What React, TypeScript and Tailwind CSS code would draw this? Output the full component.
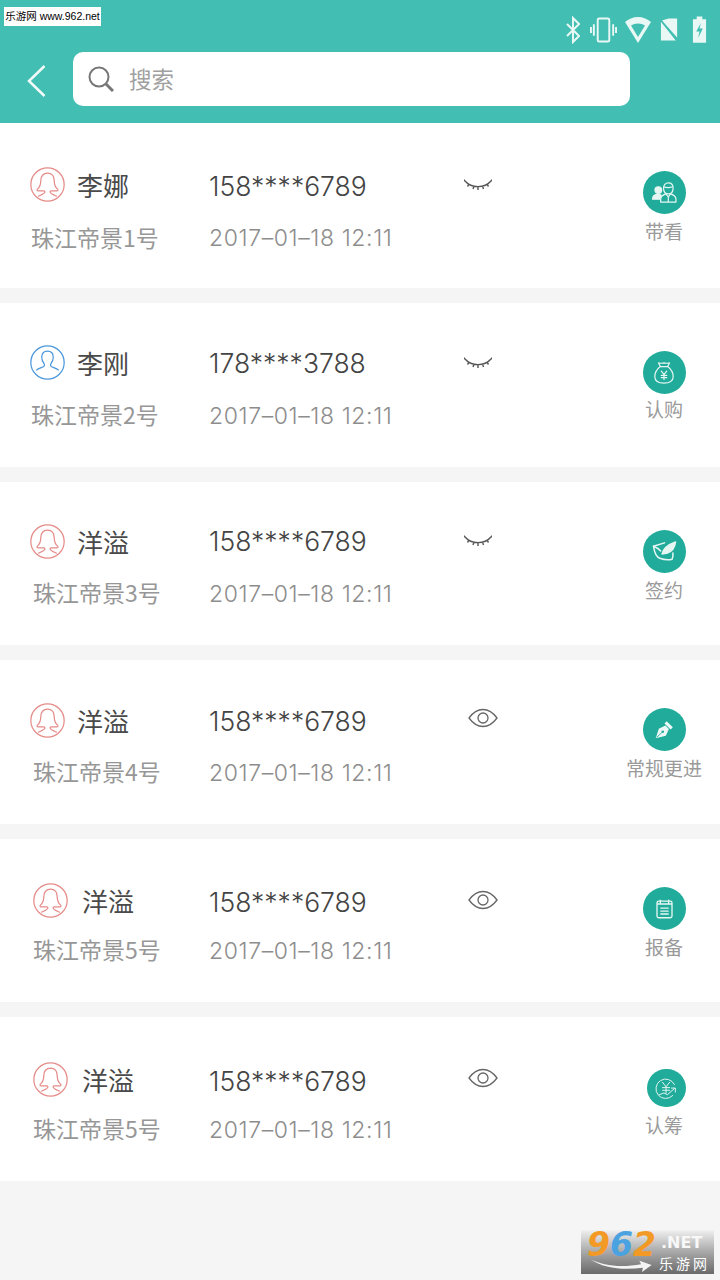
import React from "react";

const cjk = "font-['Noto_Sans_CJK_SC','Noto_Sans',sans-serif]";

function Female() {
  return (
    <svg viewBox="0 0 34 34" className="w-[35px] h-[35px] shrink-0 -mt-[2px]" fill="none" stroke="#e58b88" strokeWidth="1.200">
      <circle cx="17" cy="17" r="16.200" />
      <path d="M17 6c-4.200 0-6.500 3-6.500 7 0 4-1 6.500-3.300 8.500-.8.7-.4 1.700.8 1.700h5.500c.7 0 1 .4 1 1 0 1.300-2.500 2.300-6.500 4.300M17 6c4.200 0 6.500 3 6.500 7 0 4 1 6.500 3.300 8.500.8.7.4 1.700-.8 1.700h-5.500c-.7 0-1 .4-1 1 0 1.300 2.500 2.300 6.500 4.300" />
    </svg>
  );
}
function Male() {
  return (
    <svg viewBox="0 0 34 34" className="w-[35px] h-[35px] shrink-0 -mt-[2px]" fill="none" stroke="#4a97dc" strokeWidth="1.200">
      <circle cx="17" cy="17" r="16.200" />
      <path d="M17 6c-3.800 0-5.600 2.800-5.600 6 0 2.500.9 4.500 2.200 6 .7.9.6 2.300-.3 2.900-1.600 1-4.600 1.700-7.200 3.600M17 6c3.800 0 5.600 2.800 5.600 6 0 2.500-.9 4.500-2.200 6-.7.9-.6 2.300.3 2.900 1.600 1 4.600 1.700 7.200 3.600" />
    </svg>
  );
}
function EyeClosed() {
  return (
    <svg viewBox="0 0 28 14" className="w-[28px] h-[14px]" fill="none" stroke="#555" strokeWidth="1.400">
      <path d="M1 2c3.500 4 7.500 5.600 13 5.600S23.500 6 27 2M1 2 0 .8M27 2l1-1.200M5 5.200 3.500 7.500M10 7l-1 3M14 7.600V11M18.500 7l1 3M23 5.200l1.500 2.300" />
    </svg>
  );
}
function EyeOpen() {
  return (
    <svg viewBox="0 0 30 20" className="w-[30px] h-[20px]" fill="none" stroke="#666" strokeWidth="1.300">
      <path d="M1 10C5 4.500 9.500 1.500 15 1.500S25 4.500 29 10c-4 5.500-8.500 8.500-14 8.500S5 15.500 1 10Z" />
      <circle cx="15" cy="10" r="5" />
    </svg>
  );
}

function Glyph({ kind }: { kind: string }) {
  const c = { fill: "none", stroke: "#e6f6f3", strokeWidth: 1.300, strokeLinejoin: "round" as const, strokeLinecap: "round" as const };
  if (kind === "people")
    return (
      <svg viewBox="0 0 28 22" className="w-[27px] h-[21px]" {...c}>
        <circle cx="7.500" cy="8.500" r="3.500" fill="#e6f6f3" />
        <path d="M1.500 18c0-3 2-5 6-5 1.500 0 2 .3 3 .8L9 18Z" fill="#e6f6f3" />
        <path d="M13 6.500C13 3 15 1 18 1s5 2 5 5.500-2 6-5 6-5-2.500-5-6ZM13.500 5c2 1 6 1 9 0" />
        <path d="M10 21v-3c0-3 2.500-4.500 5.500-5.500l2.500 3 2.500-3c3 1 5.500 2.500 5.500 5.500v3ZM18 15.500V21" />
      </svg>
    );
  if (kind === "bag")
    return (
      <svg viewBox="0 0 24 26" className="w-[22px] h-[24px]" {...c}>
        <path d="M8 6 6 2c2 .8 4 .2 6 0 2 .2 4 .8 6 0l-2 4M8 6h8M8 6C4 9 2 13 2 17c0 5 4 7 10 7s10-2 10-7c0-4-2-8-6-11" />
        <path d="m9 11 3 3.500 3-3.500M12 14.500V20M9 15.500h6M9 18h6" />
      </svg>
    );
  if (kind === "sign")
    return (
      <svg viewBox="0 0 26 24" className="w-[25px] h-[23px]" {...c} strokeWidth={1.600}>
        <path d="M8 19C4.500 18 2.500 13 1.500 6.500L13 3M8 19c4 1.500 9 2 13 1 1-2 1-4.500.8-6.500" />
        <path d="M1.500 6.500C4 7.500 7 9 9 11.500" />
        <path d="M10.500 14.500C11.500 10 16 5 24.500 2c-.8 6-3.500 10-8.500 11.500-1.500.5-3.500.5-5.500 1Z" fill="#e6f6f3" />
      </svg>
    );
  if (kind === "pen")
    return (
      <svg viewBox="0 0 24 24" className="w-[21px] h-[21px]" fill="#eef9f7">
        <path d="m2 22 3.500-11L13 7.500l4 4-3.500 7.500L2 22Z" />
        <path d="M14.500 2.500 21.500 9.500 19 12l-7-7Z" />
        <circle cx="10" cy="14.500" r="1.500" fill="#20ab9b" />
        <path d="m3 21 6-5.500" stroke="#20ab9b" strokeWidth="1" />
      </svg>
    );
  if (kind === "note")
    return (
      <svg viewBox="0 0 20 24" className="w-[17px] h-[20px]" {...c} strokeLinecap="butt" strokeWidth={1.600}>
        <rect x="1" y="2.500" width="18" height="20" rx="2" />
        <path d="M5 1v4M15 1v4M1 6h18M5 11h10M5 14.500h10M5 18h10" />
      </svg>
    );
  return (
    <svg viewBox="0 0 26 26" className="w-[23px] h-[23px]" {...c} strokeWidth={1.100}>
      <path d="M22 8.500A11 11 0 1 0 20 21" />
      <path d="m8.500 6 4 5 4-5M12.500 11v7M8.500 12h8M8.500 15h8" />
      <path d="m5 20 5-2 4 2 8-7M18.500 12.500H23V17" />
    </svg>
  );
}

type R = {
  male?: boolean; name: string; sub: string; phone: string; open?: boolean; label: string; icon: string;
  h: string; left: string; nameGap: string; subM: string; mid: string; dateM: string; eye: string; act: string; labelM: string; small?: boolean;
};

const rows: R[] = [
  { name: "李娜", sub: "珠江帝景1号", phone: "158****6789", label: "带看", icon: "people", h: "h-[165px]", left: "pt-[44px] pl-[30px]", nameGap: "gap-[12px]", subM: "mt-[19px] ml-[1px]", mid: "pt-[48px]", dateM: "mt-[22px]", eye: "pt-[56px] pl-[46px]", act: "pt-[48px]", labelM: "mt-[4px]" },
  { male: true, name: "李刚", sub: "珠江帝景2号", phone: "178****3788", label: "认购", icon: "bag", h: "h-[164px]", left: "pt-[42px] pl-[30px]", nameGap: "gap-[12px]", subM: "mt-[18px] ml-[1px]", mid: "pt-[45px]", dateM: "mt-[23px]", eye: "pt-[54px] pl-[46px]", act: "pt-[48px]", labelM: "mt-[2px]" },
  { name: "洋溢", sub: "珠江帝景3号", phone: "158****6789", label: "签约", icon: "sign", h: "h-[163px]", left: "pt-[42px] pl-[30px]", nameGap: "gap-[12px]", subM: "mt-[17px] ml-[3px]", mid: "pt-[44px]", dateM: "mt-[23px]", eye: "pt-[53px] pl-[46px]", act: "pt-[48px]", labelM: "mt-[4px]" },
  { open: true, name: "洋溢", sub: "珠江帝景4号", phone: "158****6789", label: "常规更进", icon: "pen", h: "h-[164px]", left: "pt-[43px] pl-[30px]", nameGap: "gap-[12px]", subM: "mt-[17px] ml-[3px]", mid: "pt-[46px]", dateM: "mt-[22px]", eye: "pt-[48px] pl-[50px]", act: "pt-[48px]", labelM: "mt-[4px]" },
  { open: true, name: "洋溢", sub: "珠江帝景5号", phone: "158****6789", label: "报备", icon: "note", h: "h-[163px]", left: "pt-[44px] pl-[33px]", nameGap: "gap-[14px]", subM: "mt-[15px]", mid: "pt-[48px]", dateM: "mt-[19px]", eye: "pt-[51px] pl-[50px]", act: "pt-[48px]", labelM: "mt-[4px]" },
  { open: true, name: "洋溢", sub: "珠江帝景5号", phone: "158****6789", label: "认筹", icon: "yen", h: "h-[164px]", left: "pt-[45px] pl-[33px]", nameGap: "gap-[14px]", subM: "mt-[15px]", mid: "pt-[49px]", dateM: "mt-[19px]", eye: "pt-[51px] pl-[50px]", act: "pt-[52px]", labelM: "mt-[5px]", small: true },
];

function Row({ r }: { r: R }) {
  return (
    <div className={`flex bg-white ${r.h}`}>
      <div className={`w-[209px] shrink-0 ${r.left}`}>
        <div className={`flex items-center h-[36px] ${r.nameGap}`}>
          {r.male ? <Male /> : <Female />}
          <span className="text-[26px] leading-[36px] text-[#4a4a4a]">{r.name}</span>
        </div>
        <div className={`text-[23px] leading-[30px] text-[#979797] whitespace-nowrap ${r.subM}`}>{r.sub}</div>
      </div>
      <div className={`w-[255px] shrink-0 ${r.mid} font-['Inter',sans-serif]`}>
        <div className="text-[26.500px] leading-[30px] text-[#444] font-light whitespace-nowrap">{r.phone}</div>
        <div className={`text-[23px] tracking-[0.600px] leading-[30px] text-[#8d8d8d] font-light whitespace-nowrap ${r.dateM}`}>2017–01–18 12:11</div>
      </div>
      <div className={`flex-1 min-w-0 -ml-[46px] ${r.eye}`}>{r.open ? <EyeOpen /> : <EyeClosed />}</div>
      <div className={`w-[112px] shrink-0 flex flex-col items-center ${r.act}`}>
        <div className={`rounded-full bg-[#20ab9b] flex items-center justify-center ${r.small ? "w-[39px] h-[38px] ml-[4px]" : "w-[43px] h-[43px]"}`}>
          <Glyph kind={r.icon} />
        </div>
        <div className={`text-[19px] leading-[26px] text-[#9a9a9a] whitespace-nowrap ${r.labelM}`}>{r.label}</div>
      </div>
    </div>
  );
}

export default function App() {
  return (
    <div className={`relative w-[720px] h-[1280px] overflow-hidden bg-[#f5f5f5] ${cjk}`}>
      <header className="h-[123px] bg-[#42bfb2] flex flex-col">
        <div className="h-[52px] flex items-start justify-between pt-[7px] pr-[13px] pl-[4px]">
          <div className="w-[97px] h-[19px] bg-white text-black text-[10.500px] leading-[19px] text-center whitespace-nowrap font-['Liberation_Sans','Noto_Sans_CJK_SC',sans-serif]">乐游网 www.962.net</div>
          <div className="flex items-center pt-[7px]">
            <svg viewBox="0 0 14 28" className="w-[14px] h-[28px]" fill="none" stroke="#e9f7f5" strokeWidth="2">
              <path d="M1 8l12 12-6 6V2l6 6L1 20" />
            </svg>
            <svg viewBox="0 0 28 26" className="w-[27px] h-[26px] ml-[10px]" fill="none" stroke="#e9f7f5" strokeWidth="2">
              <rect x="8" y="1" width="12" height="24" rx="1.500" />
              <path d="M4 7v12M1 10v6M24 7v12M27 10v6" />
            </svg>
            <svg viewBox="0 0 26 26" className="w-[26px] h-[28px] ml-[8px]">
              <path d="M0 5C3.500 2 8 0 13 0s9.500 2 13 5L13 26Z" fill="#e9f7f5" />
              <path d="M6 8.500C8 7.300 10.300 6.500 13 6.500s5 .8 7 2L13 20Z" fill="#42bfb2" />
            </svg>
            <svg viewBox="0 0 20 26" className="w-[19px] h-[26px] ml-[9px]" fill="#e9f7f5">
              <path d="M9 1h9v20L2 3Z" />
              <path d="M1 4l16 20H1Z" />
              <path d="M0 1.500 19 26" stroke="#42bfb2" strokeWidth="1.500" />
            </svg>
            <svg viewBox="0 0 16 28" className="w-[15px] h-[31px] ml-[13px]">
              <path d="M5 0h6v3h4v25H1V3h4Z" fill="#e9f7f5" />
              <path d="M9.500 7 4.500 16H8l-1.500 7 5-10H8Z" fill="#42bfb2" />
            </svg>
          </div>
        </div>
        <div className="flex items-center pl-[27px]">
          <svg viewBox="0 0 19 32" className="w-[19px] h-[32px] shrink-0 mt-[3px]" fill="none" stroke="#f2fbfa" strokeWidth="2.500">
            <path d="M17.500 1 2 16l15.500 15" />
          </svg>
          <div className="ml-[27px] w-[557px] h-[54px] rounded-[10px] bg-white flex items-center pl-[15px]">
            <svg viewBox="0 0 26 26" className="w-[26px] h-[26px] shrink-0" fill="none" stroke="#777" strokeWidth="2">
              <circle cx="11" cy="11" r="9.500" />
              <path d="m18 18 7 7" strokeWidth="3" />
            </svg>
            <span className="ml-[15px] text-[22.500px] leading-[30px] -mt-[2px] text-[#a0a0a0]">搜索</span>
          </div>
        </div>
      </header>
      <main className="flex flex-col gap-[15px]">
        {rows.map((r, i) => (
          <Row key={i} r={r} />
        ))}
      </main>
      <div className="absolute left-[581px] top-[1230px] w-[133px] h-[44px] bg-gradient-to-b from-[#f0f0f0] via-[#a8a8a8] to-[#6a6a6a]">
        <div className="absolute left-[6px] top-0 text-[33px] leading-[30px] italic font-bold whitespace-nowrap font-['DejaVu_Sans',sans-serif]">
          <span className="text-[#f29a25]">9</span>
          <span className="text-[#4aa3e0]">6</span>
          <span className="text-[#f29a25]">2</span>
        </div>
        <div className="absolute left-[80px] top-[4px] text-[16px] leading-[18px] text-[#f8f8f8] font-bold whitespace-nowrap font-['DejaVu_Sans',sans-serif]">.NET</div>
        <div className="absolute left-[78px] top-[25px] text-[14px] leading-[16px] text-white whitespace-nowrap tracking-[3px]">乐游网</div>
        <svg viewBox="0 0 70 16" className="absolute left-[6px] top-[28px] w-[68px] h-[14px]">
          <path d="M0 1c15 8 35 10 58 6l-2-4 14 5-11 8 1-5C38 14 15 12 0 1Z" fill="#f4f4f4" />
        </svg>
      </div>
    </div>
  );
}
